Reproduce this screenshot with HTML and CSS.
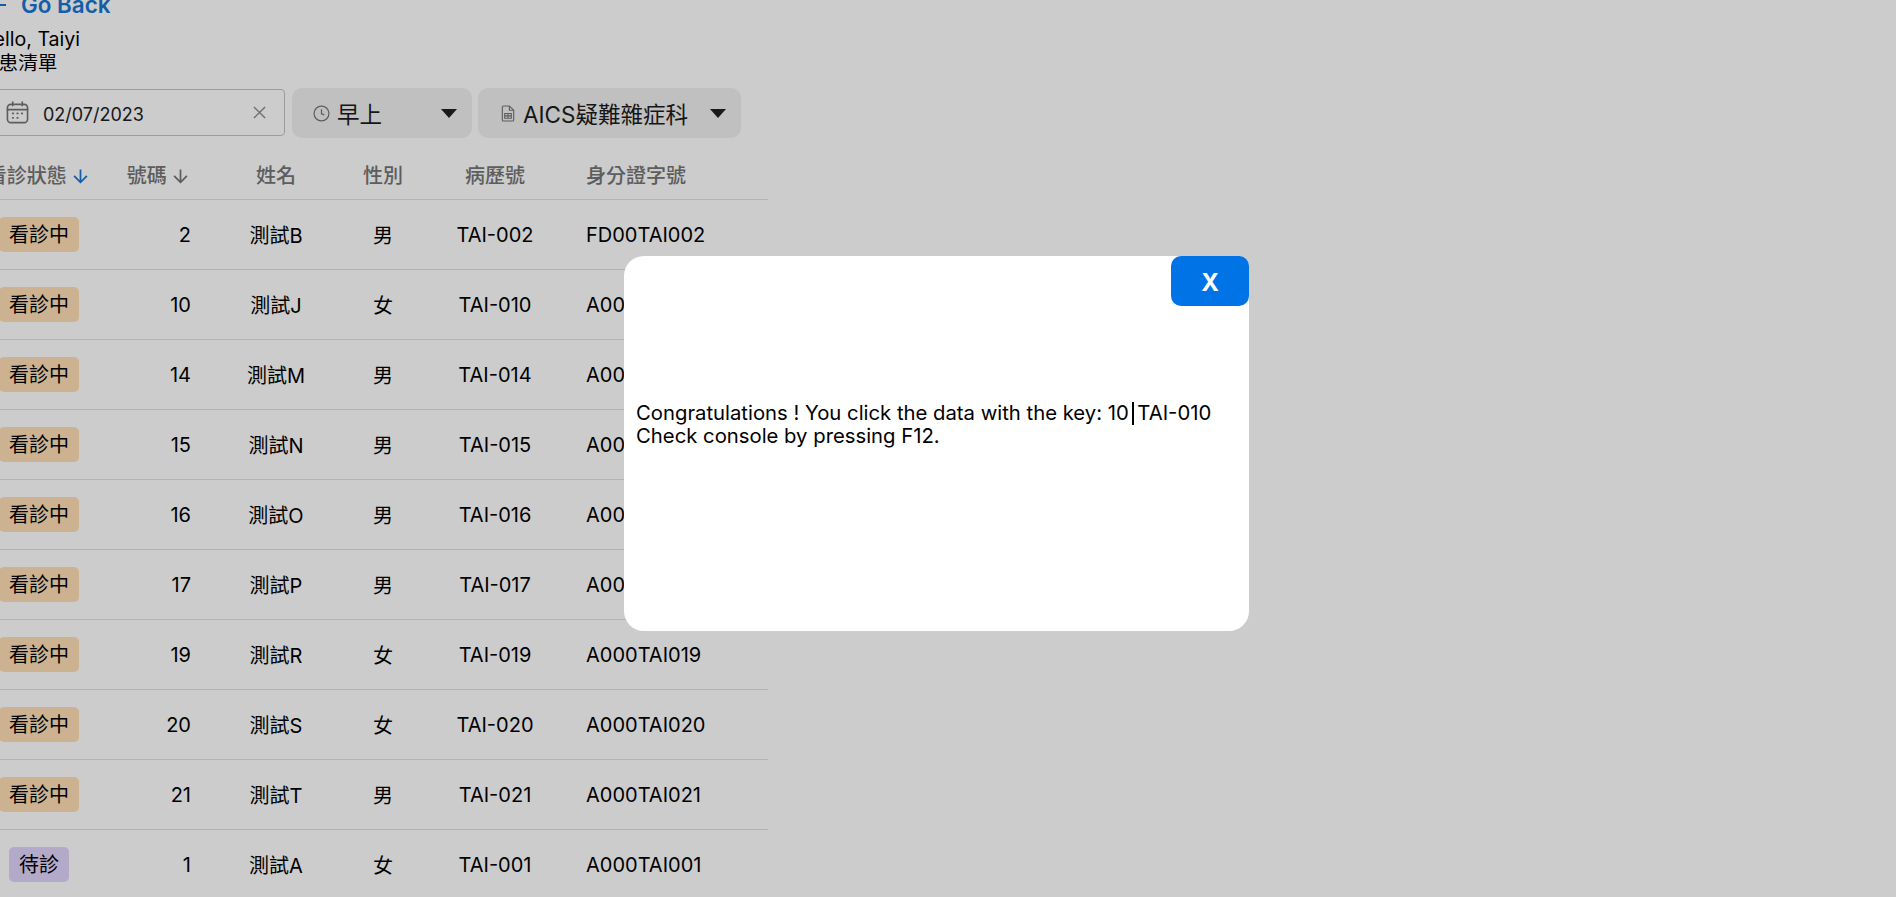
FILE: index.html
```html
<!DOCTYPE html>
<html lang="en">
<head>
    <meta charset="UTF-8">
    <title>Patient List</title>
    <link rel="stylesheet" href="styles.css">
</head>
<body>

<div class="page">
    <a class="go-back">
        <svg class="go-back-icon" viewBox="0 0 24 24"><path d="M20 11H7.83l5.59-5.59L12 4l-8 8 8 8 1.41-1.41L7.83 13H20v-2z"/></svg>
        Go Back
    </a>
    <div class="greeting">Hello, Taiyi</div>
    <div class="greeting title">病患清單</div>

    <div class="toolbar">
        <div class="date-input">
            <svg class="calendar-icon" viewBox="0 0 24 24" fill="none" stroke="currentColor" stroke-width="1.7" stroke-linecap="round">
                <rect x="1.5" y="3.5" width="21" height="19" rx="3.5"/>
                <path d="M1.5 9h21M7 1v4M17 1v4"/>
                <path d="M7 13h.6M11.7 13h.6M16.4 13h.6M7 17.5h.6M11.7 17.5h.6" stroke-width="1.8"/>
            </svg>
            <span class="date-text">02/07/2023</span>
            <svg class="clear-icon" viewBox="0 0 14 14" fill="none" stroke="currentColor" stroke-width="1.5"><path d="M1 1l12 12M13 1L1 13"/></svg>
        </div>
        <div class="select select-shift">
            <svg class="clock-icon" viewBox="0 0 24 24" fill="none" stroke="currentColor" stroke-width="1.7">
                <circle cx="12" cy="12" r="10.5"/>
                <path d="M12 6v6.5l4 1.5"/>
            </svg>
            <span class="select-text">早上</span>
            <span class="caret"></span>
        </div>
        <div class="select select-dept">
            <svg class="file-icon" viewBox="0 0 14 18" fill="none" stroke="currentColor" stroke-width="1.2">
                <path d="M1 2.2c0-.7.5-1.2 1.2-1.2H8.5L13 5.5v10.3c0 .7-.5 1.2-1.2 1.2H2.2c-.7 0-1.2-.5-1.2-1.2z"/>
                <path d="M8.5 1v4.5H13M3.5 9h7v5h-7zM3.5 11.5h7M7 9v5"/>
            </svg>
            <span class="select-text">AICS疑難雜症科</span>
            <span class="caret"></span>
        </div>
    </div>

    <table class="patients">
        <thead>
        <tr>
            <th class="col-status">看診狀態 <svg class="sort-icon active" viewBox="0 0 24 24"><path d="M20 12l-1.41-1.41L13 16.17V4h-2v12.17l-5.58-5.6L4 12l8 8 8-8z"/></svg></th>
            <th class="col-number">號碼 <svg class="sort-icon" viewBox="0 0 24 24"><path d="M20 12l-1.41-1.41L13 16.17V4h-2v12.17l-5.58-5.6L4 12l8 8 8-8z"/></svg></th>
            <th class="col-name">姓名</th>
            <th class="col-gender">性別</th>
            <th class="col-chart">病歷號</th>
            <th class="col-id">身分證字號</th>
        </tr>
        </thead>
        <tbody>
        <tr><td class="col-status"><span class="badge seeing">看診中</span></td><td class="col-number">2</td><td class="col-name">測試B</td><td class="col-gender">男</td><td class="col-chart">TAI-002</td><td class="col-id">FD00TAI002</td></tr>
        <tr><td class="col-status"><span class="badge seeing">看診中</span></td><td class="col-number">10</td><td class="col-name">測試J</td><td class="col-gender">女</td><td class="col-chart">TAI-010</td><td class="col-id">A000TAI010</td></tr>
        <tr><td class="col-status"><span class="badge seeing">看診中</span></td><td class="col-number">14</td><td class="col-name">測試M</td><td class="col-gender">男</td><td class="col-chart">TAI-014</td><td class="col-id">A000TAI014</td></tr>
        <tr><td class="col-status"><span class="badge seeing">看診中</span></td><td class="col-number">15</td><td class="col-name">測試N</td><td class="col-gender">男</td><td class="col-chart">TAI-015</td><td class="col-id">A000TAI015</td></tr>
        <tr><td class="col-status"><span class="badge seeing">看診中</span></td><td class="col-number">16</td><td class="col-name">測試O</td><td class="col-gender">男</td><td class="col-chart">TAI-016</td><td class="col-id">A000TAI016</td></tr>
        <tr><td class="col-status"><span class="badge seeing">看診中</span></td><td class="col-number">17</td><td class="col-name">測試P</td><td class="col-gender">男</td><td class="col-chart">TAI-017</td><td class="col-id">A000TAI017</td></tr>
        <tr><td class="col-status"><span class="badge seeing">看診中</span></td><td class="col-number">19</td><td class="col-name">測試R</td><td class="col-gender">女</td><td class="col-chart">TAI-019</td><td class="col-id">A000TAI019</td></tr>
        <tr><td class="col-status"><span class="badge seeing">看診中</span></td><td class="col-number">20</td><td class="col-name">測試S</td><td class="col-gender">女</td><td class="col-chart">TAI-020</td><td class="col-id">A000TAI020</td></tr>
        <tr><td class="col-status"><span class="badge seeing">看診中</span></td><td class="col-number">21</td><td class="col-name">測試T</td><td class="col-gender">男</td><td class="col-chart">TAI-021</td><td class="col-id">A000TAI021</td></tr>
        <tr><td class="col-status"><span class="badge waiting">待診</span></td><td class="col-number">1</td><td class="col-name">測試A</td><td class="col-gender">女</td><td class="col-chart">TAI-001</td><td class="col-id">A000TAI001</td></tr>
        </tbody>
    </table>
</div>

<div class="overlay">
    <div class="modal">
        <button class="modal-close">X</button>
        <div class="modal-body">
            <div>Congratulations ! You click the data with the key: 10<span class="key-sep"></span>TAI-010</div>
            <div>Check console by pressing F12.</div>
        </div>
    </div>
</div>

</body>
</html>
```

FILE: styles.css
```css
html, body {
    height: 100%;
}
body {
    margin: 0;
    overflow: hidden;
    background-color: #fff;
    color: #000;
    font-family: Inter, "Noto Sans CJK TC", sans-serif;
}
/* the page in the reference is scrolled a bit right and down */
.page {
    width: 789px;
    margin-top: -11px;
    margin-left: -21px;
}
.go-back {
    display: flex;
    align-items: center;
    gap: 11px;
    height: 31px;
    color: #1976d2;
    font-size: 22.4px;
    font-weight: 600;
}
.go-back-icon {
    width: 24px;
    height: 24px;
    fill: currentColor;
    margin-left: 7px;
}
.greeting {
    font-size: 19.6px;
    line-height: 23px;
}
.greeting:nth-of-type(1) {
    margin-top: 8px;
}
.greeting.title {
    margin-top: 1px;
}
.toolbar {
    display: flex;
    align-items: center;
    gap: 6px;
    margin-top: 13px;
    height: 50px;
}
.date-input {
    display: flex;
    align-items: center;
    box-sizing: border-box;
    width: 306px;
    height: 47px;
    margin-right: 1px;
    margin-top: -1px;
    padding-left: 26px;
    border: 1px solid #c4c4c4;
    border-radius: 4px;
    color: #212121;
}
.calendar-icon {
    width: 23px;
    height: 23px;
    color: #757575;
}
.date-text {
    margin-left: 14px;
    font-size: 18px;
    line-height: 22px;
    padding-top: 5px;
    flex: 1;
}
.clear-icon {
    width: 13px;
    height: 13px;
    margin-right: 18px;
    color: #8a8a8a;
}
.select {
    display: flex;
    align-items: center;
    box-sizing: border-box;
    height: 50px;
    border-radius: 10px;
    background-color: #f0f0f0;
    color: #1c1c1c;
}
.select-shift {
    width: 180px;
    padding-left: 21px;
}
.select-dept {
    width: 263px;
    padding-left: 23px;
}
.select-text {
    flex: 1;
    font-size: 22.5px;
}
.clock-icon {
    width: 17px;
    height: 17px;
    margin-right: 7px;
    color: #757575;
}
.file-icon {
    width: 14px;
    height: 17px;
    margin-right: 8px;
    color: #757575;
}
.caret {
    width: 0;
    height: 0;
    margin-right: 15px;
    border-left: 8px solid transparent;
    border-right: 8px solid transparent;
    border-top: 9px solid #212121;
}
.patients {
    table-layout: fixed;
    width: 789px;
    margin-top: 11px;
    border-collapse: collapse;
}
th, td {
    padding: 0;
    border-bottom: 1px solid #e0e0e0;
    text-align: center;
}
th {
    height: 50px;
    color: #757575;
    font-size: 20px;
    font-weight: 500;
}
td {
    height: 69px;
    font-size: 20px;
}
.col-status {
    width: 120px;
}
.col-number {
    width: 106px;
    padding-right: 14px;
    text-align: right;
    box-sizing: border-box;
}
.col-name {
    width: 142px;
}
.col-gender {
    width: 72px;
}
.col-chart {
    width: 152px;
}
.col-id {
    padding-left: 15px;
    text-align: left;
}
.sort-icon {
    width: 21px;
    height: 21px;
    margin-left: -2px;
    vertical-align: -4px;
    fill: #757575;
}
.sort-icon.active {
    fill: #1976d2;
}
.badge {
    display: inline-block;
    padding: 1px 10px 0;
    border-radius: 5px;
    line-height: 34px;
    font-size: 20px;
}
.badge.seeing {
    background-color: #ffdfb5;
}
.badge.waiting {
    background-color: #e0d4fa;
}
.overlay {
    position: fixed;
    inset: 0;
    background-color: rgba(0, 0, 0, 0.2);
}
.modal {
    position: absolute;
    left: 624px;
    top: 256px;
    display: flex;
    align-items: center;
    width: 625px;
    height: 375px;
    border-radius: 20px;
    background-color: #fff;
}
.modal-close {
    position: absolute;
    top: 0;
    right: 0;
    width: 78px;
    height: 50px;
    padding-top: 3px;
    border: none;
    border-radius: 10px;
    background-color: #0073e6;
    color: #fff;
    font-family: inherit;
    font-size: 24px;
    font-weight: 700;
}
.modal-body {
    padding-left: 12px;
    margin-bottom: 37px;
    font-size: 20.3px;
    line-height: 22.5px;
}
.key-sep {
    display: inline-block;
    width: 1.5px;
    height: 23px;
    margin: 0 3.5px;
    vertical-align: -5px;
    background-color: #000;
}
```
